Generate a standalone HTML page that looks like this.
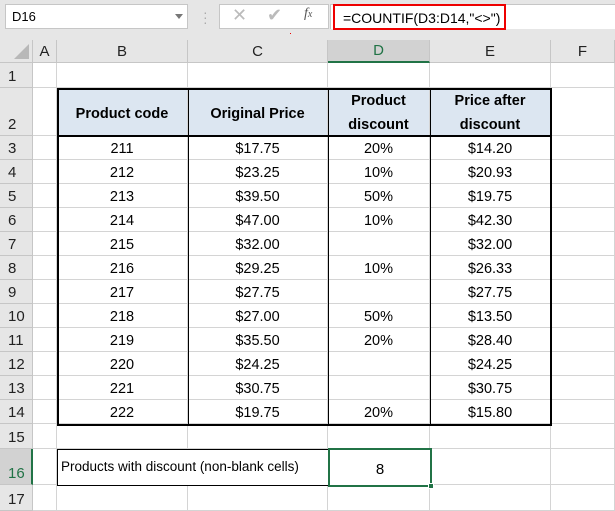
<!DOCTYPE html><html><head><style>
body{margin:0;width:615px;height:511px;overflow:hidden;background:#fff;font-family:"Liberation Sans",sans-serif;position:relative}
.a{position:absolute;box-sizing:border-box}
.g{position:absolute;left:0;top:40px;display:grid;grid-template-columns:33px 24px 131px 140px 102px 121px 64px;grid-template-rows:23px 25px 48px repeat(12,24px) 25px 36px 26px}
.g div{border-right:1px solid #d4d4d4;border-bottom:1px solid #d4d4d4;font-size:14.5px;color:#000;display:flex;align-items:center;justify-content:center;padding-top:3px;box-sizing:border-box;white-space:nowrap}
.g .h{background:#e6e6e6;border-color:#c6c6c6;color:#222;font-size:15px;align-items:center;padding:0}
.g .r{background:#e6e6e6;border-color:#c6c6c6;color:#222;justify-content:flex-start;align-items:flex-end;padding:0 0 2px 8px;font-size:15px}
.g .t{background:#dce6f1;font-weight:bold;padding-top:5px}
.g .t2{background:#dce6f1;font-weight:bold;white-space:normal;text-align:center;line-height:24px;padding-top:2px}
</style></head><body>
<div class="a" style="left:0;top:0;width:615px;height:40px;background:#e6e6e6"></div>
<div class="a" style="left:5px;top:4px;width:183px;height:25px;background:#fff;border:1px solid #c6c6c6;font-size:13px;padding:4px 0 0 6px">D16</div>
<div class="a" style="left:175px;top:14px;width:0;height:0;border-left:4px solid transparent;border-right:4px solid transparent;border-top:5px solid #777"></div>
<div class="a" style="left:203px;top:10px;color:#aaa;font-size:14px;line-height:5px">·<br>·<br>·</div>
<div class="a" style="left:219px;top:4px;width:110px;height:25px;background:#fff;border:1px solid #c6c6c6"></div>
<div class="a" style="left:232px;top:5px;color:#bbb;font-size:18px">✕</div>
<div class="a" style="left:267px;top:5px;color:#bbb;font-size:18px">✔</div>
<div class="a" style="left:304px;top:6px;color:#555;font-size:14px;font-family:'Liberation Serif',serif;font-style:italic">f<span style="font-size:10px">x</span></div>
<div class="a" style="left:330px;top:4px;width:285px;height:25px;background:#fff;border-top:1px solid #c6c6c6;border-left:1px solid #c6c6c6"></div>
<div class="a" style="left:333px;top:4px;width:173px;height:26px;border:2px solid #e00;font-size:14px;padding:4px 0 0 8px">=COUNTIF(D3:D14,"&lt;&gt;")</div>
<div class="a" style="left:290px;top:33px;width:1px;height:1px;background:#e00"></div>
<div class="g">
<div class="h" style="background:#e6e6e6;position:relative"><span style="position:absolute;right:3px;bottom:3px;width:0;height:0;border-left:15px solid transparent;border-bottom:15px solid #b8b8b8"></span></div><div class="h">A</div><div class="h">B</div><div class="h">C</div><div class="h" style="background:#d2d2d2;color:#217346;border-bottom:2px solid #217346">D</div><div class="h">E</div><div class="h">F</div>
<div class="r">1</div><div></div><div></div><div></div><div></div><div></div><div></div>
<div class="r">2</div><div></div><div class="t">Product code</div><div class="t">Original Price</div><div class="t2">Product discount</div><div class="t2">Price after discount</div><div></div>
<div class="r">3</div><div></div><div>211</div><div>$17.75</div><div>20%</div><div>$14.20</div><div></div>
<div class="r">4</div><div></div><div>212</div><div>$23.25</div><div>10%</div><div>$20.93</div><div></div>
<div class="r">5</div><div></div><div>213</div><div>$39.50</div><div>50%</div><div>$19.75</div><div></div>
<div class="r">6</div><div></div><div>214</div><div>$47.00</div><div>10%</div><div>$42.30</div><div></div>
<div class="r">7</div><div></div><div>215</div><div>$32.00</div><div></div><div>$32.00</div><div></div>
<div class="r">8</div><div></div><div>216</div><div>$29.25</div><div>10%</div><div>$26.33</div><div></div>
<div class="r">9</div><div></div><div>217</div><div>$27.75</div><div></div><div>$27.75</div><div></div>
<div class="r">10</div><div></div><div>218</div><div>$27.00</div><div>50%</div><div>$13.50</div><div></div>
<div class="r">11</div><div></div><div>219</div><div>$35.50</div><div>20%</div><div>$28.40</div><div></div>
<div class="r">12</div><div></div><div>220</div><div>$24.25</div><div></div><div>$24.25</div><div></div>
<div class="r">13</div><div></div><div>221</div><div>$30.75</div><div></div><div>$30.75</div><div></div>
<div class="r">14</div><div></div><div>222</div><div>$19.75</div><div>20%</div><div>$15.80</div><div></div>
<div class="r">15</div><div></div><div></div><div></div><div></div><div></div><div></div>
<div class="r" style="background:#d2d2d2;color:#217346;border-right:2px solid #217346">16</div><div></div><div></div><div></div><div></div><div></div><div></div>
<div class="r">17</div><div></div><div></div><div></div><div></div><div></div><div></div>
</div>
<div class="a" style="left:57px;top:88px;width:495px;height:338px;border:2px solid #000"></div>
<div class="a" style="left:57px;top:135px;width:495px;height:2px;background:#000"></div>
<div class="a" style="left:188px;top:88px;width:1px;height:338px;background:#000"></div>
<div class="a" style="left:328px;top:88px;width:1px;height:338px;background:#000"></div>
<div class="a" style="left:430px;top:88px;width:1px;height:338px;background:#000"></div>
<div class="a" style="left:57px;top:449px;width:273px;height:37px;border:1px solid #000;background:#fff;font-size:13.5px;padding:9px 0 0 3px;white-space:nowrap">Products with discount (non-blank cells)</div>
<div class="a" style="left:328px;top:448px;width:104px;height:39px;border:2px solid #217346;background:#fff;font-size:15px;text-align:center;padding-top:11px">8</div>
<div class="a" style="left:428px;top:483px;width:6px;height:6px;background:#217346;border:1px solid #fff"></div>
</body></html>
